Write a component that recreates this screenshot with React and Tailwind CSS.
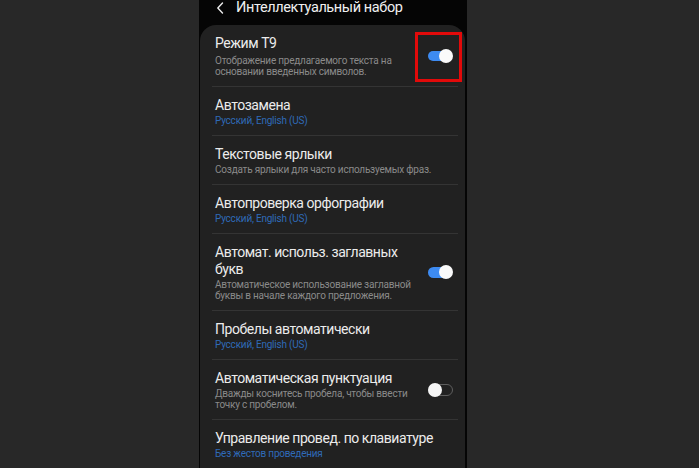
import React from "react";

const font = { fontFamily: "Roboto, 'Noto Sans', sans-serif" };

function Toggle({ on }) {
  if (on) {
    return (
      <div className="relative w-[25px] h-[14px] shrink-0">
        <div className="absolute left-0 top-[2px] w-[24px] h-[10.5px] rounded-full bg-[#3d8bf2]" />
        <div className="absolute right-0 top-0 w-[14px] h-[14px] rounded-full bg-[#fafafa]" />
      </div>
    );
  }
  return (
    <div className="relative w-[25px] h-[14px] shrink-0">
      <div className="absolute left-0 top-[1px] w-[25px] h-[12px] rounded-full border border-[#5e5e5e]" />
      <div className="absolute left-0 top-0 w-[14px] h-[14px] rounded-full bg-[#f5f5f5]" />
    </div>
  );
}

function Row({ title, sub, blue, toggle, first, highlight }) {
  return (
    <div className="relative flex items-center pl-[15px] pr-[12px] pt-[10px] pb-[9px]">
      <div className={toggle !== undefined ? "w-[200px] mr-[13px]" : "flex-1"}>
        <div className="text-[14px] leading-[17px] tracking-[-0.45px] text-[#ececec]">{title}</div>
        <div
          className={
            (first ? "mt-[2.5px] " : "mt-[1px] ") +
            "text-[10px] leading-[11px] tracking-[-0.22px] " +
            (blue ? "text-[#2f6ab8]" : "text-[#8a8a8a]")
          }
        >
          {sub}
        </div>
      </div>
      {toggle !== undefined && <Toggle on={toggle} />}
      {highlight && (
        <div className="absolute left-[215px] top-[7px] w-[47px] h-[50px] border-[3px] border-[#e20a0a]" />
      )}
    </div>
  );
}

function Divider() {
  return <div className="h-px bg-[#343434] ml-[12px] mr-[7px]" />;
}

export default function App() {
  return (
    <div className="w-[699px] h-[468px] bg-[#282828] flex overflow-hidden" style={font}>
      <div className="ml-[199px] w-[268px] bg-[#050505] flex flex-col">
        <div className="h-[25px] flex items-start shrink-0">
          <svg className="ml-[17px] mt-[2px]" width="8" height="12" viewBox="0 0 8 12">
            <polyline points="6.5,1 1.8,6 6.5,11" fill="none" stroke="#ececec" strokeWidth="1.4" strokeLinecap="round" strokeLinejoin="round" />
          </svg>
          <div className="ml-[12px] text-[14.5px] leading-[16px] tracking-[-0.4px] text-[#f0f0f0] whitespace-nowrap">
            Интеллектуальный набор
          </div>
        </div>
        <div className="ml-[1px] mr-[2px] flex-1 bg-[#212121] rounded-t-[16px]">
          <Row
            first
            highlight
            title="Режим T9"
            sub="Отображение предлагаемого текста на основании введенных символов."
            toggle={true}
          />
          <Divider />
          <Row title="Автозамена" sub="Русский, English (US)" blue />
          <Divider />
          <Row title="Текстовые ярлыки" sub="Создать ярлыки для часто используемых фраз." />
          <Divider />
          <Row title="Автопроверка орфографии" sub="Русский, English (US)" blue />
          <Divider />
          <Row
            title="Автомат. использ. заглавных букв"
            sub="Автоматическое использование заглавной буквы в начале каждого предложения."
            toggle={true}
          />
          <Divider />
          <Row title="Пробелы автоматически" sub="Русский, English (US)" blue />
          <Divider />
          <Row
            title="Автоматическая пунктуация"
            sub="Дважды коснитесь пробела, чтобы ввести точку с пробелом."
            toggle={false}
          />
          <Divider />
          <Row title="Управление провед. по клавиатуре" sub="Без жестов проведения" blue />
        </div>
      </div>
    </div>
  );
}
